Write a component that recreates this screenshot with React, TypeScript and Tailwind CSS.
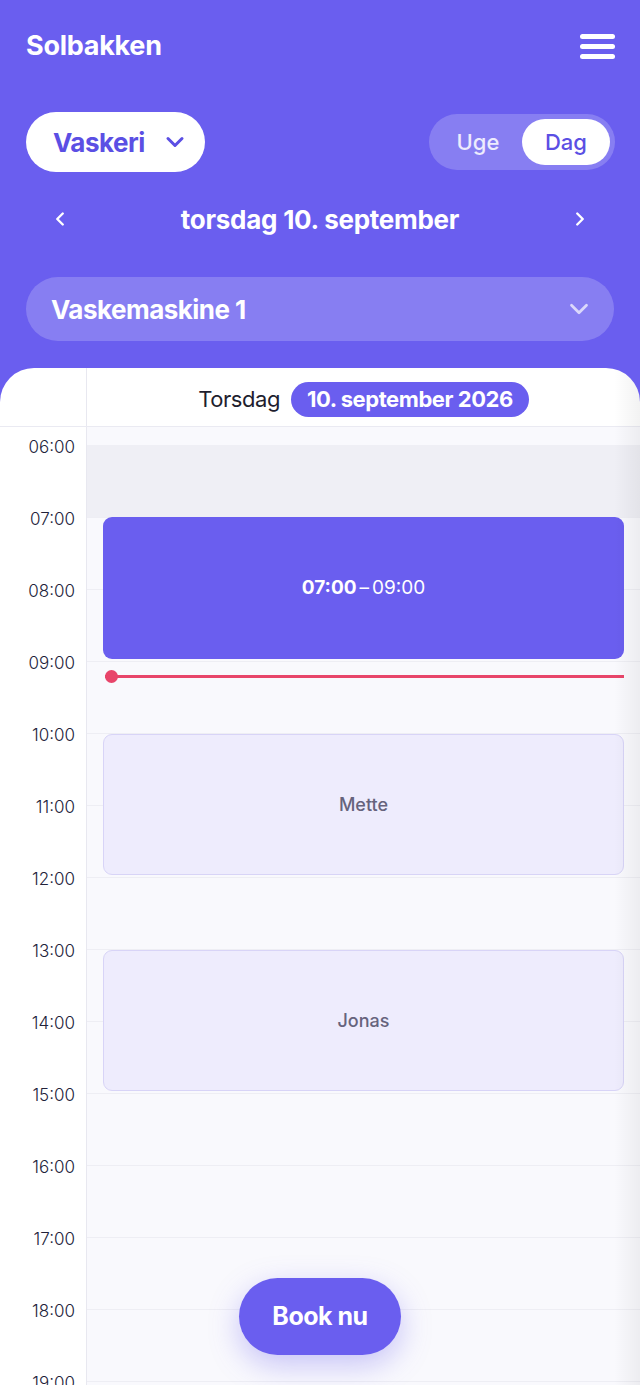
import { ChevronDown, ChevronLeft, ChevronRight } from "lucide-react";

const hours = [6, 7, 8, 9, 10, 11, 12, 13, 14, 15, 16, 17, 18, 19];

const bookings = [
  { start: 10, end: 12, name: "Mette" },
  { start: 13, end: 15, name: "Jonas" },
];

const pad = (h: number) => `${h.toString().padStart(2, "0")}:00`;

// px from the top of the grid body
const topFor = (h: number) => 18 + (h - 6) * 72;

export default function App() {
  return (
    <div className="relative w-[640px] h-[1385px] overflow-hidden bg-[#6A5EEF] font-['Inter',sans-serif] flex flex-col">
      {/* Header */}
      <div className="px-[26px] pt-[28px]">
        <div className="h-[36px] flex items-center justify-between">
          <span className="text-white text-[27px] font-bold tracking-[-0.01em]">Solbakken</span>
          <div className="flex flex-col gap-[5px] mr-[-1px]">
            <div className="w-[35px] h-[5px] rounded-full bg-white" />
            <div className="w-[35px] h-[5px] rounded-full bg-white" />
            <div className="w-[35px] h-[5px] rounded-full bg-white" />
          </div>
        </div>

        {/* Category + view toggle */}
        <div className="mt-[48px] h-[60px] flex items-center justify-between">
          <button className="h-[60px] w-[179px] rounded-full bg-white flex items-center pl-[27px] gap-[16px] text-[#5B4FE4]">
            <span className="text-[26px] font-bold tracking-[-0.02em]">Vaskeri</span>
            <ChevronDown size={28} strokeWidth={2.6} />
          </button>
          <div className="h-[56px] rounded-full bg-white/20 p-[5px] flex mr-[-1px]">
            <button className="w-[88px] h-[46px] rounded-full text-white/85 text-[22px] font-medium">Uge</button>
            <button className="w-[88px] h-[46px] rounded-full bg-white text-[#5B4FE4] text-[22px] font-medium">Dag</button>
          </div>
        </div>

        {/* Date navigation */}
        <div className="mt-[30px] h-[34px] flex items-center justify-between px-[23px]">
          <ChevronLeft size={22} strokeWidth={2.6} className="text-white" />
          <span className="text-white text-[26px] font-bold tracking-[-0.01em]">torsdag 10. september</span>
          <ChevronRight size={22} strokeWidth={2.6} className="text-white" />
        </div>

        {/* Machine select */}
        <div className="mt-[41px] h-[64px] rounded-full bg-white/20 flex items-center justify-between pl-[25px] pr-[20px]">
          <span className="text-white text-[26px] font-bold tracking-[-0.02em]">Vaskemaskine 1</span>
          <ChevronDown size={30} strokeWidth={2.2} className="text-white/70" />
        </div>
      </div>

      {/* Calendar card */}
      <div className="relative mt-[27px] flex-1 bg-white rounded-t-[34px] overflow-hidden">
        <div className="flex h-[59px] border-b border-[#EAEAF2]">
          <div className="w-[87px] border-r border-[#E8E8F0]" />
          <div className="flex-1 flex items-center justify-center gap-[11px] pt-[4px]">
            <span className="text-[22px] text-[#1E1E2E] tracking-[-0.02em]">Torsdag</span>
            <span className="h-[35px] px-[16px] rounded-full bg-[#6A5EEF] text-white text-[22px] font-bold tracking-[-0.02em] flex items-center">
              10. september 2026
            </span>
          </div>
        </div>

        <div className="flex">
          {/* Time column */}
          <div className="w-[87px] border-r border-[#E8E8F0] pt-[8px] bg-white">
            {hours.map((h) => (
              <div key={h} className="h-[72px] pr-[11px] text-right text-[17px] leading-[24px] font-light text-[#22223A]">
                {pad(h)}
              </div>
            ))}
          </div>

          {/* Day column */}
          <div className="relative flex-1 bg-[#F9F9FD]">
            <div className="h-[18px]" />
            {hours.map((h) => (
              <div
                key={h}
                className={h === 6 ? "h-[72px] bg-[#EFEFF5]" : "h-[72px] border-t border-[#EEEEF4]"}
              />
            ))}

            {/* Own booking */}
            <div
              className="absolute left-[16px] right-[16px] rounded-[9px] bg-[#6A5EEF] flex items-center justify-center text-white text-[19px]"
              style={{ top: topFor(7), height: 142 }}
            >
              <span className="font-bold">07:00</span>
              <span className="mx-[3px]">–</span>
              <span>09:00</span>
            </div>

            {/* Now line */}
            <div className="absolute left-[18px] right-[16px] h-[3px] bg-[#E8456A]" style={{ top: 248 }} />
            <div className="absolute left-[18px] w-[13px] h-[13px] rounded-full bg-[#E8456A]" style={{ top: 243 }} />

            {bookings.map((b) => (
              <div
                key={b.name}
                className="absolute left-[16px] right-[16px] rounded-[9px] bg-[#EEECFD] border border-[#D8D4F7] flex items-center justify-center text-[18px] font-medium text-[#66637C]"
                style={{ top: topFor(b.start) + 1, height: 141 }}
              >
                {b.name}
              </div>
            ))}
          </div>
        </div>

        {/* right edge shade */}
        <div className="absolute top-0 right-0 bottom-0 w-[26px] bg-gradient-to-r from-transparent to-black/[0.05]" />
      </div>

      {/* Floating action */}
      <button className="absolute left-[239px] bottom-[30px] w-[162px] h-[77px] rounded-full bg-[#6A5EEF] text-white text-[25px] font-bold tracking-[-0.02em] shadow-[0_10px_30px_rgba(106,94,239,0.35)]">
        Book nu
      </button>
    </div>
  );
}
